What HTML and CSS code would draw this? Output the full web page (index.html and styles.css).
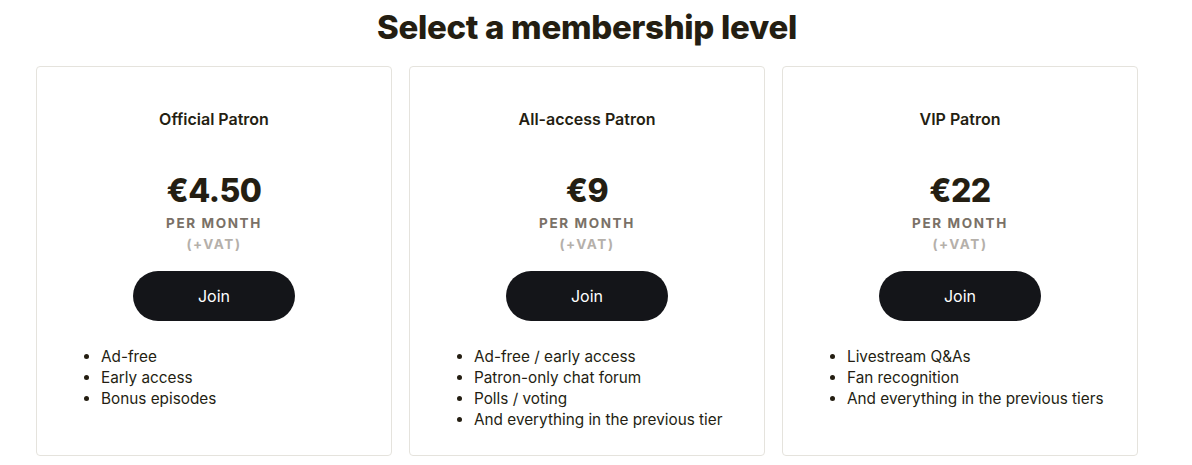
FILE: index.html
```html
<!DOCTYPE html>
<html lang="en">
<head>
<meta charset="utf-8">
<title>Select a membership level</title>
<link rel="stylesheet" href="styles.css">
</head>
<body>
<main class="page">
  <h1 class="title">Select a membership level</h1>
  <div class="tiers">
    <section class="tier">
      <h2 class="tier-name">Official Patron</h2>
      <div class="price">€4.50</div>
      <div class="period">PER MONTH</div>
      <div class="vat">(+VAT)</div>
      <button class="join">Join</button>
      <ul class="perks">
        <li>Ad-free</li>
        <li>Early access</li>
        <li>Bonus episodes</li>
      </ul>
    </section>
    <section class="tier">
      <h2 class="tier-name">All-access Patron</h2>
      <div class="price">€9</div>
      <div class="period">PER MONTH</div>
      <div class="vat">(+VAT)</div>
      <button class="join">Join</button>
      <ul class="perks">
        <li>Ad-free / early access</li>
        <li>Patron-only chat forum</li>
        <li>Polls / voting</li>
        <li>And everything in the previous tier</li>
      </ul>
    </section>
    <section class="tier">
      <h2 class="tier-name">VIP Patron</h2>
      <div class="price">€22</div>
      <div class="period">PER MONTH</div>
      <div class="vat">(+VAT)</div>
      <button class="join">Join</button>
      <ul class="perks">
        <li>Livestream Q&amp;As</li>
        <li>Fan recognition</li>
        <li>And everything in the previous tiers</li>
      </ul>
    </section>
  </div>
</main>
</body>
</html>
```
FILE: styles.css
```css
* { box-sizing: border-box; }
html, body { margin: 0; background: #fff; }
body {
  font-family: Inter, "Noto Sans", sans-serif;
  color: #241e12;
}
.page {
  width: 1102px;
  margin-left: 36px;
  padding-top: 8px;
}
.title {
  margin: 0 0 20px;
  text-align: center;
  font-family: Inter, sans-serif;
  font-weight: 800;
  font-size: 33px;
  line-height: 38px;
  color: #241e12;
  letter-spacing: -0.3px;
}
.tiers {
  display: grid;
  grid-template-columns: repeat(3, 1fr);
  gap: 17px;
}
.tier {
  height: 390px;
  border: 1px solid #e5e3dd;
  border-radius: 4px;
  padding: 41px 20px 0;
  display: flex;
  flex-direction: column;
  align-items: center;
}
.tier-name {
  margin: 0;
  font-size: 16px;
  line-height: 22px;
  font-weight: 600;
  color: #241e12;
}
.price {
  margin-top: 41px;
  font-family: Inter, sans-serif;
  font-weight: 800;
  font-size: 32px;
  line-height: 40px;
  color: #241e12;
  letter-spacing: -0.5px;
}
.period {
  margin-top: 2px;
  font-size: 13.5px;
  line-height: 20px;
  font-weight: 700;
  letter-spacing: 1.6px;
  color: #7a7167;
}
.vat {
  margin-top: 1px;
  font-size: 13.5px;
  line-height: 20px;
  font-weight: 700;
  letter-spacing: 1.6px;
  color: #b5b0aa;
}
.join {
  margin-top: 17px;
  width: 162px;
  height: 50px;
  border: 0;
  border-radius: 25px;
  background: #141519;
  color: #fff;
  font-family: Inter, sans-serif;
  font-size: 16px;
  font-weight: 400;
  cursor: pointer;
}
.perks {
  align-self: stretch;
  margin: 25px 0 0;
  padding-left: 44px;
  font-size: 15.3px;
  line-height: 21px;
  color: #241e12;
}
```
